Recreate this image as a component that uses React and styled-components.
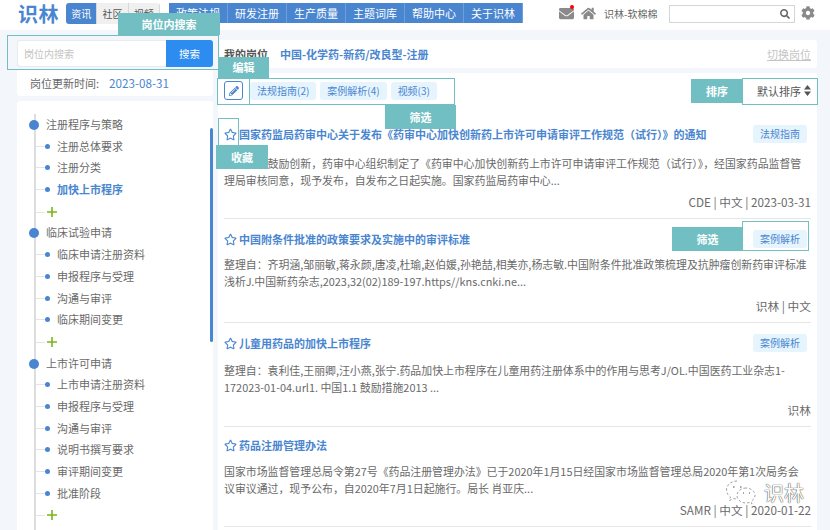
import React from 'react'
import styled, { createGlobalStyle } from 'styled-components'
import { FaEnvelope, FaHome, FaCog, FaSearch, FaRegStar, FaPencilAlt } from 'react-icons/fa'

const teal = '#72bfc3'
const blue = '#4a86d0'

const GlobalStyle = createGlobalStyle`
  html, body { margin:0; padding:0; }
  body {
    background:#f3f7fc;
    font-family:"Noto Sans CJK SC","Liberation Sans",sans-serif;
    font-size:11px;
    color:#6a6a6a;
  }
`

const Page = styled.div`
  position:relative;
  width:830px;
  height:530px;
  overflow:hidden;
`

const Header = styled.header`
  height:30px;
  background:#fff;
  display:flex;
  align-items:flex-start;
  padding:3px 0 0 18px;
  box-sizing:border-box;
`
const Logo = styled.div`
  width:48px;
  font-size:20px;
  line-height:22px;
  font-weight:700;
  color:${blue};
  letter-spacing:0.5px;
`
const SiteTabs = styled.div`
  display:flex;
  width:94px;
  height:21px;
  border-radius:3px;
  overflow:hidden;
  margin-right:9px;
`
const SiteTab = styled.div`
  flex:1;
  text-align:center;
  line-height:21px;
  font-size:10px;
  color:${p => (p.$active ? '#fff' : '#555')};
  background:${p => (p.$active ? blue : '#f0f0f0')};
  border-right:1px solid #d8d8d8;
`
const Nav = styled.nav`
  display:flex;
  background:${blue};
  height:20px;
`
const NavItem = styled.div`
  width:59px;
  text-align:center;
  line-height:20px;
  font-size:11px;
  color:#fff;
  box-sizing:border-box;
  border-right:1px solid #6f9fd9;
`
const Tools = styled.div`
  display:flex;
  align-items:center;
  height:20px;
  margin-left:36px;
  color:#8a8a8a;
`
const MailWrap = styled.span`
  position:relative;
  display:flex;
  width:22px;
  font-size:15px;
`
const RedDot = styled.i`
  position:absolute;
  left:11px;
  top:-1px;
  width:4px;
  height:4px;
  border-radius:50%;
  background:#f00;
`
const HomeIcon = styled(FaHome)`
  font-size:15px;
  margin-right:8px;
`
const UserName = styled.span`
  font-size:10px;
  color:#666;
  width:65px;
`
const TopSearch = styled.div`
  width:126px;
  height:18px;
  box-sizing:border-box;
  border:1px solid #d5d5d5;
  display:flex;
  align-items:center;
  justify-content:flex-end;
  padding-right:4px;
  font-size:10px;
  color:#666;
  margin:1px 6px 0 0;
`
const GearIcon = styled(FaCog)`
  font-size:14px;
`

const Body = styled.div`
  display:flex;
  gap:5px;
  padding:10px 13px 0 17px;
`
const Side = styled.aside`
  width:196px;
  flex:none;
  display:flex;
  flex-direction:column;
`
const SearchRow = styled.div`
  display:flex;
  height:27px;
`
const SearchInput = styled.div`
  flex:1;
  box-sizing:border-box;
  background:#fff;
  border:1px solid #e8ebef;
  border-right:none;
  border-radius:3px 0 0 3px;
  padding-left:6px;
  line-height:25px;
  font-size:10px;
  color:#c4c4c4;
`
const SearchBtn = styled.div`
  width:47px;
  background:#2d8cf0;
  border-radius:0 3px 3px 0;
  color:#fff;
  text-align:center;
  line-height:27px;
  font-size:10.5px;
`
const UpdateRow = styled.div`
  margin-top:3px;
  height:26px;
  background:#fff;
  border-radius:0 0 3px 3px;
  padding-left:13px;
  line-height:25px;
  font-size:11px;
  color:#666;
`
const UpdateDate = styled.span`
  color:${blue};
  font-size:11.7px;
  margin-left:10px;
`
const TreePanel = styled.div`
  position:relative;
  margin-top:5px;
  height:440px;
  background:#fff;
  border-radius:3px 3px 0 0;
  padding-top:13px;
  box-sizing:border-box;
`
const TreeLine = styled.div`
  position:absolute;
  left:17px;
  top:13px;
  bottom:0;
  width:2px;
  background:#ddd;
`
const Scroll = styled.div`
  position:absolute;
  right:0;
  top:27px;
  width:3px;
  height:214px;
  background:${blue};
  border-radius:2px;
`
const TreeHead = styled.div`
  position:relative;
  height:21.7px;
  line-height:21.7px;
  padding-left:29px;
  color:#6a6a6a;
  &::before {
    content:'';
    position:absolute;
    left:12px;
    top:6px;
    width:10px;
    height:10px;
    border-radius:50%;
    background:${blue};
  }
`
const TreeLeaf = styled.div`
  position:relative;
  height:21.7px;
  line-height:21.7px;
  padding-left:40px;
  color:${p => (p.$active ? blue : '#6a6a6a')};
  font-weight:${p => (p.$active ? 700 : 400)};
  &::before {
    content:'';
    position:absolute;
    left:19px;
    top:10px;
    width:10px;
    height:1px;
    background:#e4e4e4;
  }
  &::after {
    content:'';
    position:absolute;
    left:28px;
    top:8px;
    width:5px;
    height:5px;
    border-radius:50%;
    background:${blue};
  }
`
const TreeAdd = styled.div`
  position:relative;
  height:21.7px;
  &::before {
    content:'';
    position:absolute;
    left:19px;
    top:11px;
    width:9px;
    height:1px;
    background:#e4e4e4;
  }
`
const PlusIcon = styled.svg`
  position:absolute;
  left:30px;
  top:6px;
  width:10px;
  height:10px;
`

const Main = styled.main`
  flex:1;
  display:flex;
  flex-direction:column;
  min-width:0;
`
const PostRow = styled.div`
  height:28px;
  background:#fff;
  border-radius:3px;
  padding:0 6px;
  display:flex;
  align-items:center;
`
const PostLabel = styled.span`
  font-weight:700;
  color:#555;
  margin-right:12px;
`
const PostName = styled.span`
  font-weight:700;
  color:${blue};
  flex:1;
`
const SwitchLink = styled.span`
  color:#c4c4c4;
  text-decoration:underline;
`
const ListPanel = styled.div`
  margin-top:5px;
  background:#fff;
  border-radius:3px 3px 0 0;
  padding:0 6px;
  height:457px;
`
const FilterRow = styled.div`
  height:42px;
  display:flex;
  align-items:flex-start;
  padding-top:8px;
  box-sizing:border-box;
`
const EditBtn = styled.div`
  width:19px;
  height:19px;
  box-sizing:border-box;
  border:1px solid ${blue};
  border-radius:3px;
  display:flex;
  align-items:center;
  justify-content:center;
  color:${blue};
  font-size:10px;
  margin-right:7px;
`
const Tag = styled.span`
  display:inline-block;
  height:18px;
  line-height:18px;
  padding:0 7px;
  background:#e6f4fd;
  border-radius:3px;
  font-size:10px;
  color:${blue};
  white-space:nowrap;
`
const FilterTag = styled(Tag)`
  margin:1px 4px 0 0;
`
const SortBox = styled.div`
  margin-left:auto;
  display:flex;
  align-items:center;
  gap:3px;
  color:#555;
  height:19px;
`
const SortIcon = styled.svg`
  width:7px;
  height:11px;
`

const Item = styled.article`
  height:${p => p.$h}px;
  box-sizing:border-box;
  border-bottom:1px solid #e6e6e6;
  padding-top:${p => p.$top}px;
  display:flex;
  flex-direction:column;
`
const TitleRow = styled.div`
  display:flex;
  align-items:center;
  height:18px;
`
const Star = styled(FaRegStar)`
  flex:none;
  width:13px;
  height:13px;
  color:${blue};
  margin-right:${p => p.$gap || 2}px;
`
const ItemTitle = styled.div`
  flex:1;
  font-weight:700;
  color:${blue};
  white-space:nowrap;
`
const ItemTag = styled(Tag)`
  margin-right:4px;
`
const Desc = styled.p`
  margin:${p => p.$gap}px 0 0;
  line-height:17.3px;
  color:#6a6a6a;
  font-size:10.9px;
`
const Source = styled.div`
  margin-top:auto;
  padding-bottom:8px;
  text-align:right;
  line-height:16px;
  font-size:11.7px;
  color:#6a6a6a;
`

const Label = styled.div`
  position:absolute;
  left:${p => p.$x}px;
  top:${p => p.$y}px;
  width:${p => p.$w}px;
  height:${p => p.$h}px;
  background:${teal};
  color:#fff;
  font-weight:700;
  font-size:11px;
  text-align:center;
  line-height:${p => p.$h}px;
`
const Outline = styled.div`
  position:absolute;
  left:${p => p.$x}px;
  top:${p => p.$y}px;
  width:${p => p.$w}px;
  height:${p => p.$h}px;
  box-sizing:border-box;
  border:1px solid ${teal};
`
const Watermark = styled.div`
  position:absolute;
  left:725px;
  top:478px;
  display:flex;
  align-items:center;
  gap:7px;
  color:#fff;
  font-size:20px;
  line-height:30px;
  text-shadow:0 0 1px #444, 0 0 1px #444;
`

const treeData = [
  ['注册程序与策略', ['注册总体要求', '注册分类', '加快上市程序']],
  ['临床试验申请', ['临床申请注册资料', '申报程序与受理', '沟通与审评', '临床期间变更']],
  ['上市许可申请', ['上市申请注册资料', '申报程序与受理', '沟通与审评', '说明书撰写要求', '审评期间变更', '批准阶段']],
]

const items = [
  {
    h: 104, top: 10, tag: '法规指南', descGap: 12,
    title: '国家药监局药审中心关于发布《药审中心加快创新药上市许可申请审评工作规范（试行）》的通知',
    lines: ['为进一步鼓励创新，药审中心组织制定了《药审中心加快创新药上市许可申请审评工作规范（试行）》，经国家药品监督管', '理局审核同意，现予发布，自发布之日起实施。国家药监局药审中心...'],
    source: 'CDE | 中文 | 2023-03-31',
  },
  {
    h: 104, top: 11, tag: '案例解析', descGap: 8,
    title: '中国附条件批准的政策要求及实施中的审评标准',
    lines: ['整理自：齐玥涵,邹丽敏,蒋永颜,唐凌,杜瑜,赵伯媛,孙艳喆,相美亦,杨志敏.中国附条件批准政策梳理及抗肿瘤创新药审评标准', '浅析J.中国新药杂志,2023,32(02)189-197.https//kns.cnki.ne...'],
    source: '识林 | 中文',
  },
  {
    h: 104, top: 11, tag: '案例解析', descGap: 10,
    title: '儿童用药品的加快上市程序',
    lines: ['整理自：袁利佳,王丽卿,汪小燕,张宁.药品加快上市程序在儿童用药注册体系中的作用与思考J/OL.中国医药工业杂志1-', '172023-01-04.url1. 中国1.1 鼓励措施2013 ...'],
    source: '识林',
  },
  {
    h: 100, top: 9, descGap: 9,
    title: '药品注册管理办法',
    lines: ['国家市场监督管理总局令第27号《药品注册管理办法》已于2020年1月15日经国家市场监督管理总局2020年第1次局务会', '议审议通过，现予公布，自2020年7月1日起施行。局长 肖亚庆...'],
    source: 'SAMR | 中文 | 2020-01-22',
  },
]

const App = () => {
  return (
    <Page>
      <GlobalStyle />
      <Header>
        <Logo>识林</Logo>
        <SiteTabs>
          <SiteTab $active>资讯</SiteTab>
          <SiteTab>社区</SiteTab>
          <SiteTab>视频</SiteTab>
        </SiteTabs>
        <Nav>
          {['政策法规', '研发注册', '生产质量', '主题词库', '帮助中心', '关于识林'].map(n => (
            <NavItem key={n}>{n}</NavItem>
          ))}
        </Nav>
        <Tools>
          <MailWrap><FaEnvelope /><RedDot /></MailWrap>
          <HomeIcon />
          <UserName>识林-软棉棉</UserName>
          <TopSearch><FaSearch /></TopSearch>
          <GearIcon />
        </Tools>
      </Header>

      <Body>
        <Side>
          <SearchRow>
            <SearchInput>岗位内搜索</SearchInput>
            <SearchBtn>搜索</SearchBtn>
          </SearchRow>
          <UpdateRow>岗位更新时间:<UpdateDate>2023-08-31</UpdateDate></UpdateRow>
          <TreePanel>
            <TreeLine />
            <Scroll />
            {treeData.map(([head, leaves]) => (
              <div key={head}>
                <TreeHead>{head}</TreeHead>
                {leaves.map(l => (
                  <TreeLeaf key={l} $active={l === '加快上市程序'}>{l}</TreeLeaf>
                ))}
                <TreeAdd>
                  <PlusIcon viewBox="0 0 10 10"><path d="M5 0v10M0 5h10" stroke="#7ab51d" strokeWidth="1.6" /></PlusIcon>
                </TreeAdd>
              </div>
            ))}
          </TreePanel>
        </Side>

        <Main>
          <PostRow>
            <PostLabel>我的岗位</PostLabel>
            <PostName>中国-化学药-新药/改良型-注册</PostName>
            <SwitchLink>切换岗位</SwitchLink>
          </PostRow>
          <ListPanel>
            <FilterRow>
              <EditBtn><FaPencilAlt /></EditBtn>
              <FilterTag>法规指南(2)</FilterTag>
              <FilterTag>案例解析(4)</FilterTag>
              <FilterTag>视频(3)</FilterTag>
              <SortBox>
                默认排序
                <SortIcon viewBox="0 0 7 11"><path d="M3.5 0L7 4.5H0zM3.5 11L0 6.5h7z" fill="#555" /></SortIcon>
              </SortBox>
            </FilterRow>
            {items.map(it => (
              <Item key={it.title} $h={it.h} $top={it.top}>
                <TitleRow>
                  <Star />
                  <ItemTitle>{it.title}</ItemTitle>
                  {it.tag && <ItemTag>{it.tag}</ItemTag>}
                </TitleRow>
                <Desc $gap={it.descGap}>{it.lines[0]}<br />{it.lines[1]}</Desc>
                <Source>{it.source}</Source>
              </Item>
            ))}
          </ListPanel>
        </Main>
      </Body>

      <Outline $x={7} $y={35} $w={212} $h={35} />
      <Label $x={118} $y={13} $w={102} $h={22}>岗位内搜索</Label>
      <Outline $x={217} $y={78} $w={33} $h={27} />
      <Outline $x={249} $y={78} $w={206} $h={27} />
      <Label $x={218} $y={57} $w={51} $h={21}>编辑</Label>
      <Label $x={385} $y={105} $w={71} $h={24}>筛选</Label>
      <Label $x={691} $y={79} $w={52} $h={24}>排序</Label>
      <Outline $x={742} $y={78} $w={76} $h={27} />
      <Outline $x={218} $y={118} $w={21} $h={28} />
      <Label $x={216} $y={145} $w={52} $h={24}>收藏</Label>
      <Outline $x={742} $y={221} $w={67} $h={30} />
      <Label $x={672} $y={227} $w={71} $h={24}>筛选</Label>

      <Watermark>
        <svg width="32" height="28" viewBox="0 0 32 28" fill="none" stroke="#888" strokeWidth="0.8" strokeDasharray="2.5 2">
          <path d="M12 2C6 2 1.5 6 1.5 11c0 3 1.6 5.4 4 7l-1 3.500 4-2c1.200.3 2.400.5 3.500.5" />
          <path d="M21 9c-5 0-9 3.300-9 7.500S16 24 21 24c1 0 2-.2 3-.5l3 1.500-.8-2.800c2.200-1.400 3.800-3.500 3.800-5.700C30 12.300 26 9 21 9z" />
          <path d="M8 8h1.500M15 8h1.500M18 14h1M24 14h1" strokeDasharray="none" strokeWidth="1.400" />
        </svg>
        <span>识林</span>
      </Watermark>
    </Page>
  )
}

export default App
